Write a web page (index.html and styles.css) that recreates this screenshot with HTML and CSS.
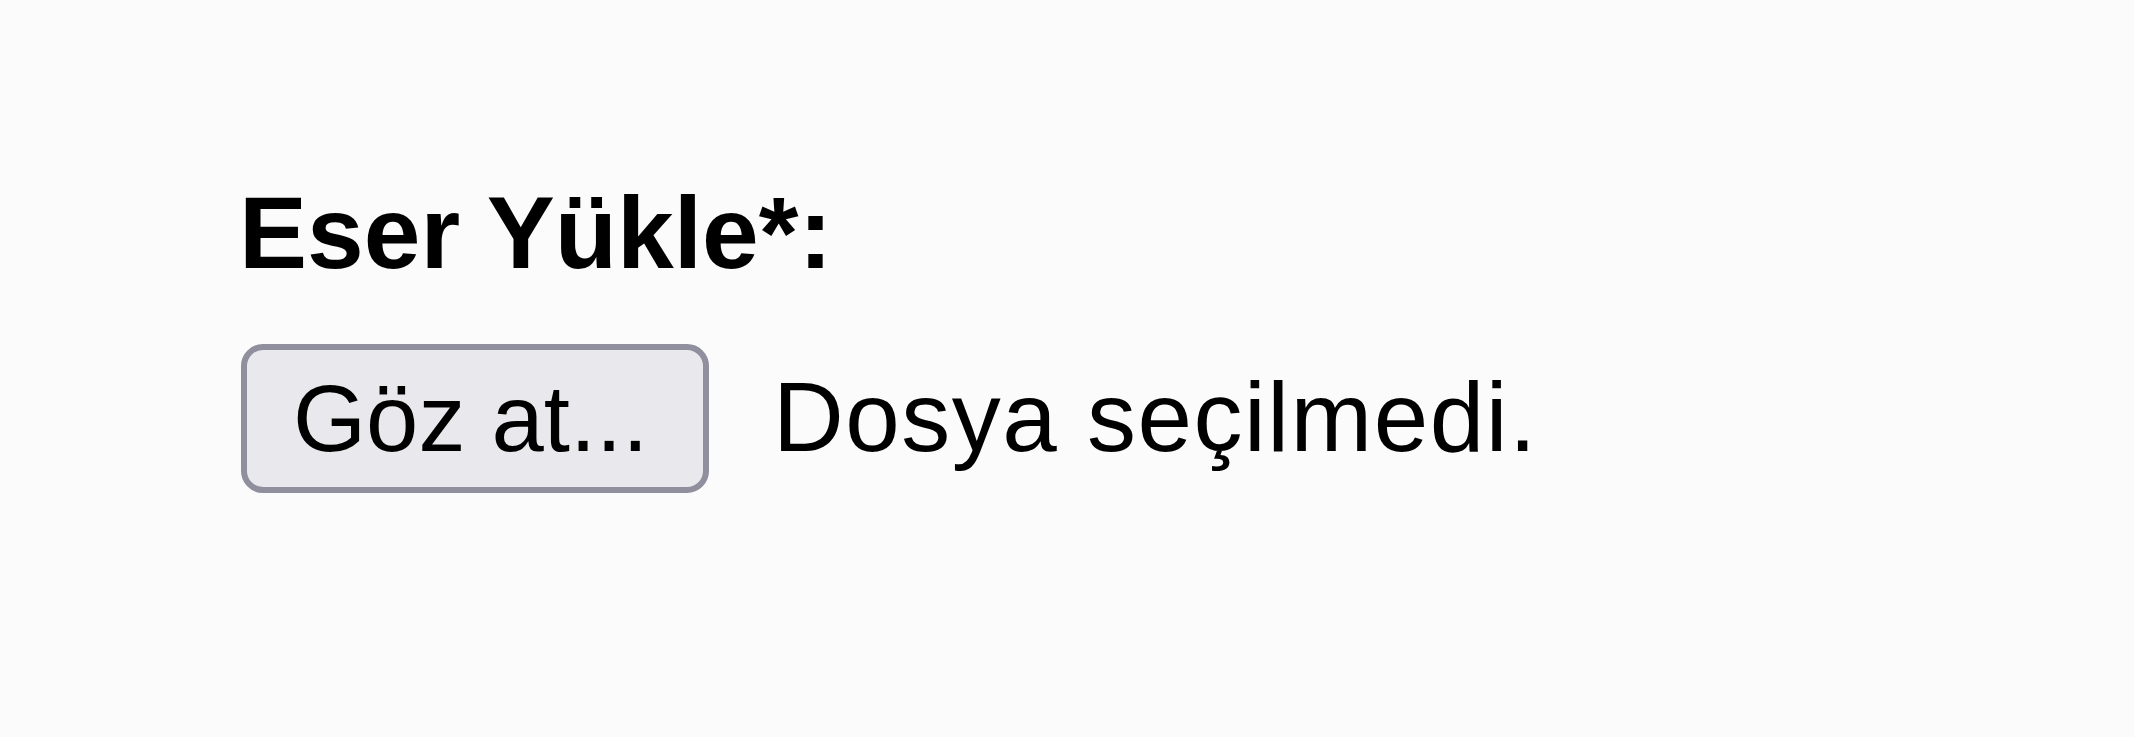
FILE: index.html
```html
<!DOCTYPE html>
<html lang="tr">
<head>
  <meta charset="UTF-8" />
  <meta name="viewport" content="width=device-width, initial-scale=1.0"/>
  <title>Eser Yükle</title>
  <link rel="stylesheet" href="styles.css">
</head>
<body>
  <div class="upload-field">
    <label class="upload-label" for="eser-file">Eser Yükle*:</label>
    <div class="file-row">
      <span class="file-btn" id="eser-file">Göz at...</span>
      <span class="file-status">Dosya seçilmedi.</span>
    </div>
  </div>
</body>
</html>
```

FILE: styles.css
```css
body {
  margin: 0;
  font-family: 'Liberation Sans', Arial, sans-serif;
  background-color: #fbfbfb;
  color: #000;
}

.upload-field {
  padding: 182px 0 0 235px;
}

.upload-label {
  display: block;
  margin-left: 4px;
  font-size: 102px;
  font-weight: 700;
  line-height: 1;
  margin-bottom: 60px;
}

.file-row {
  display: flex;
  align-items: baseline;
}

.file-btn {
  display: inline-block;
  box-sizing: border-box;
  width: 468px;
  margin-left: 6px;
  padding: 22px 0 21px 46px;
  font-size: 94px;
  line-height: 1;
  background-color: #e9e9ed;
  border: 6px solid #8f8f9d;
  border-radius: 22px;
}

.file-status {
  margin-left: 64px;
  font-size: 98px;
  letter-spacing: 1.5px;
  line-height: 1;
}
```
